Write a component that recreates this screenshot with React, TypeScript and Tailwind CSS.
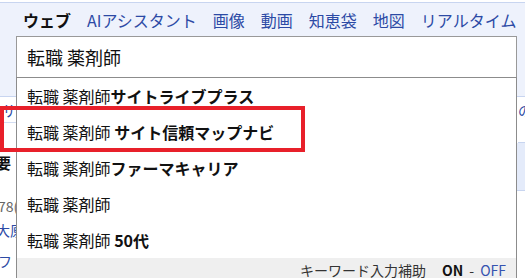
import React from 'react';

const tabs = ['AIアシスタント', '画像', '動画', '知恵袋', '地図', 'リアルタイム'];

const suggestions: { base: string; extra: string }[] = [
  { base: '転職 薬剤師', extra: 'サイトライブプラス' },
  { base: '転職 薬剤師 ', extra: 'サイト信頼マップナビ' },
  { base: '転職 薬剤師', extra: 'ファーマキャリア' },
  { base: '転職 薬剤師', extra: '' },
  { base: '転職 薬剤師 ', extra: '50代' },
];

export default function App() {
  return (
    <div
      className="relative w-[525px] h-[278px] overflow-hidden bg-white text-[#222]"
      style={{ fontFamily: '"Noto Sans CJK JP", "Noto Sans", sans-serif' }}
    >
      {/* Header: tabs + search box */}
      <header className="mt-[2px] h-[95px] bg-[#eef2fc] border-t border-b border-[#c8d5f0]">
        <nav className="flex items-center gap-4 h-[33px] pl-[23px] text-[16px] leading-[20px] whitespace-nowrap">
          <span className="font-bold text-[#111]">ウェブ</span>
          {tabs.map((t) => (
            <span key={t} className="text-[#2c4aa5]">
              {t}
            </span>
          ))}
        </nav>
        <div className="ml-[16px] w-[501px] h-[42px] bg-white border border-[#999] flex items-center pl-[10px] text-[18px] leading-[24px] text-[#111]">
          転職 薬剤師
        </div>
      </header>

      {/* Page content peeking behind the suggestion list */}
      <div className="flex">
        <div className="w-[16px] overflow-hidden whitespace-nowrap text-[14px]">
          <div className="h-[26px] border-b border-[#d3ddf2] pt-[4px] leading-[18px] ml-[2px] text-[#2c4aa5]">
            サイト
          </div>
          <div className="mt-[31px] h-[18px] leading-[18px] -ml-[4px] font-bold text-[15px] text-[#111]">
            要
          </div>
          <div className="mt-[25px] h-[18px] leading-[18px] -ml-[2px] text-[#666]">78(</div>
          <div className="mt-[6px] h-[18px] leading-[18px] -ml-[4px] text-[#2c4aa5]">大原</div>
          <div className="mt-[13px] h-[18px] leading-[18px] -ml-[2px] text-[#2c4aa5]">フ</div>
        </div>
        <div className="flex-1" />
        <div className="w-[8px] overflow-hidden whitespace-nowrap text-[14px]">
          <div className="h-[46px] border-b border-[#c8d5f0] pt-[4px] leading-[18px] ml-[1px] text-[#2c4aa5]">
            の
          </div>
          <div className="h-[48px] bg-[#e4ebfa] border-b border-[#c8d5f0]" />
        </div>
      </div>

      {/* Suggestion dropdown */}
      <div className="absolute left-[16px] top-[77px] w-[501px] bg-white border-x border-t border-[#8c8c8c]">
        {suggestions.map((s, i) => (
          <div
            key={i}
            className="h-[36px] flex items-center pl-[10px] text-[16px] leading-[20px] text-[#111] whitespace-pre"
          >
            <span>{s.base}</span>
            {s.extra && <span className="font-bold">{s.extra}</span>}
          </div>
        ))}
        <div className="h-[24px] bg-[#efefef] flex items-center justify-end pr-[10px] text-[14px] leading-[18px] text-[#333] whitespace-nowrap">
          <span>キーワード入力補助</span>
          <span className="ml-[16px] font-bold text-[#111]">ON</span>
          <span className="mx-[6px]">-</span>
          <span className="text-[#3553b0]">OFF</span>
        </div>
      </div>

      {/* Highlight annotation */}
      <div className="absolute left-0 top-[106px] w-[305px] h-[46px] border-[4px] border-[#e8202a]" />
    </div>
  );
}
